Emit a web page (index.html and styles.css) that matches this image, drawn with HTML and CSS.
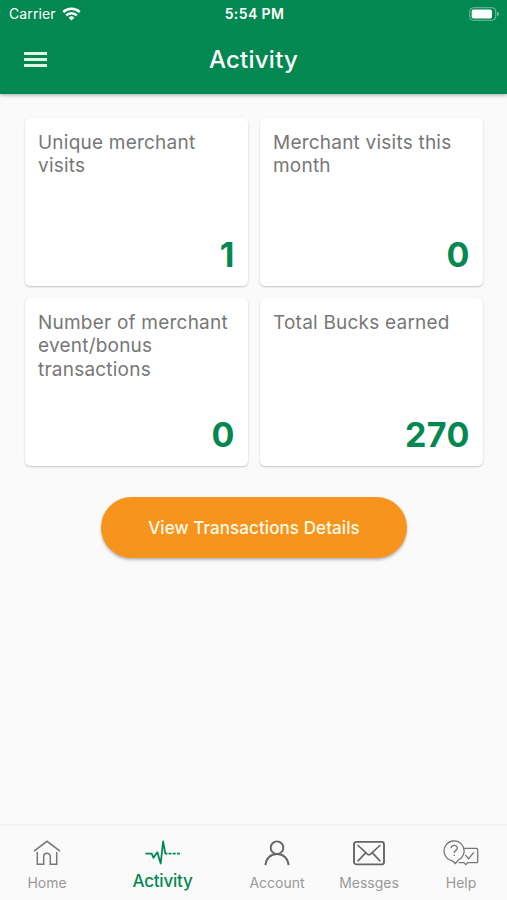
FILE: index.html
```html
<!DOCTYPE html>
<html lang="en">

<head>
	<meta charset="UTF-8">
	<title>Activity</title>
	<link rel="stylesheet" href="styles.css">
</head>

<body>
	<header>
		<div class="status">
			<div class="carrier">
				<span>Carrier</span>
				<svg width="19" height="14" viewBox="0 0 19 14" fill="none" stroke="#fff" stroke-width="2.5">
					<path d="M1.2 5.1a11.8 11.8 0 0 1 16.6 0"/>
					<path d="M4.2 8.4a7.5 7.5 0 0 1 10.6 0"/>
					<path d="M9.5 13.6L6.6 10.7a4.1 4.1 0 0 1 5.8 0z" fill="#fff" stroke="none"/>
				</svg>
			</div>
			<strong class="time">5:54 PM</strong>
			<div class="battery">
				<svg width="31" height="14" viewBox="0 0 31 14">
					<rect x="0.8" y="0.7" width="26" height="12.6" rx="3.6" fill="none" stroke="#fff" stroke-opacity="0.45"/>
					<rect x="2.7" y="2.5" width="20.3" height="9" rx="1.8" fill="#fff"/>
					<path d="M28.2 4.8c2.4.9 2.4 3.5 0 4.4z" fill="#fff" fill-opacity="0.5"/>
				</svg>
			</div>
		</div>
		<div class="toolbar">
			<button class="menu" type="button" aria-label="Menu">
				<span></span>
				<span></span>
				<span></span>
			</button>
			<h1>Activity</h1>
		</div>
	</header>

	<main>
		<ul class="cards">
			<li>
				<p>Unique merchant visits</p>
				<strong>1</strong>
			</li>
			<li>
				<p>Merchant visits this month</p>
				<strong>0</strong>
			</li>
			<li>
				<p>Number of merchant event/bonus transactions</p>
				<strong>0</strong>
			</li>
			<li>
				<p>Total Bucks earned</p>
				<strong>270</strong>
			</li>
		</ul>
		<button class="details" type="button">View Transactions Details</button>
	</main>

	<nav>
		<a class="tab">
			<svg width="28" height="26" viewBox="0 0 28 26">
				<path d="M1 11.2L14 1.3l13 9.9M4.3 12v12.2h6.4v-7.6a3.3 3.3 0 0 1 6.6 0v7.6h6.4V12"/>
			</svg>
			<span>Home</span>
		</a>
		<a class="tab active">
			<svg width="36" height="26" viewBox="0 0 36 26">
				<path d="M0.5 13.6h6.2l1.8 4.2 3.8-5.5 3.4 11.2L18.1 1.5l2.2 12.1h2.2"/>
				<path d="M23.5 13.6h12" stroke-dasharray="3 1.2"/>
			</svg>
			<span>Activity</span>
		</a>
		<a class="tab">
			<svg class="bold" width="26" height="26" viewBox="0 0 26 26">
				<circle cx="13" cy="7.7" r="6.3"/>
				<path d="M1.4 25.2c.6-6.8 5.3-11.2 11.6-11.2s11 4.4 11.6 11.2"/>
			</svg>
			<span>Account</span>
		</a>
		<a class="tab">
			<svg class="bold" width="32" height="26" viewBox="0 0 32 26">
				<rect x="1" y="1.9" width="30" height="22.5" rx="2.5"/>
				<path d="M4.6 5l9.8 9.1q1.6 1.3 3.2 0L27.4 5M4.6 21.4l8-8.5M27.4 21.4l-8-8.5" stroke-width="1.6"/>
			</svg>
			<span>Messges</span>
		</a>
		<a class="tab">
			<svg class="thin" width="36" height="26" viewBox="0 0 36 26">
				<path d="M20.2 8.4h13.2a1.3 1.3 0 0 1 1.3 1.3v11.7a1.3 1.3 0 0 1-1.3 1.3h-8.8l-1.7 1.9-1.9-1.9h-5.4"/>
				<path d="M9 20.7a10 10 0 1 1 6.3-.7l-2.9 3.5z"/>
				<path d="M8 8.3c.2-4 6.3-3.9 6.3-.2 0 2.300-3.100 2.300-3.100 5M11.200 14.500v1.500"/>
				<path d="M22.2 14.9l3.400 3.800 5.200-6.300"/>
			</svg>
			<span>Help</span>
		</a>
	</nav>
</body>

</html>
```

FILE: styles.css
```css
* {
	box-sizing: border-box;
}

body {
	display: flex;
	flex-direction: column;
	height: 100vh;
	margin: 0;
	background: #fafafa;
	font-family: Inter, 'Liberation Sans', sans-serif;
	overflow: hidden;
}

header {
	height: 94px;
	background: #038851;
	color: #fff;
	box-shadow: 0 1px 4px rgba(0, 0, 0, 0.35);
}

.status {
	display: grid;
	grid-template-columns: 1fr auto 1fr;
	align-items: center;
	height: 27px;
	padding: 0 7px 0 9px;
	font-size: 14px;
}

.carrier {
	display: flex;
	align-items: center;
	gap: 6px;
	letter-spacing: 0.1px;
}

.time {
	font-weight: 600;
	letter-spacing: 0.4px;
}

.battery {
	display: flex;
	justify-content: flex-end;
}

.toolbar {
	display: grid;
	grid-template-columns: 70px 1fr 70px;
	align-items: center;
	height: 65px;
}

.menu {
	display: flex;
	flex-direction: column;
	gap: 3px;
	width: 23px;
	margin-left: 24px;
	padding: 0;
	border: 0;
	background: none;
}

.menu span {
	height: 3px;
	background: #e0f5e8;
}

h1 {
	margin: 0;
	font-size: 24px;
	font-weight: 500;
	letter-spacing: 0.25px;
	text-align: center;
}

main {
	flex: 1;
	padding: 24px 24px 0 25px;
	text-align: center;
}

.cards {
	display: grid;
	grid-template-columns: 1fr 1fr;
	gap: 12px;
	margin: 0 0 31px;
	padding: 0;
	list-style: none;
	text-align: left;
}

.cards li {
	display: flex;
	flex-direction: column;
	justify-content: space-between;
	height: 168px;
	padding: 13px;
	background: #fff;
	border-radius: 5px;
	box-shadow: 0 1px 2px rgba(0, 0, 0, 0.22);
}

.cards p {
	margin: 0;
	color: #777;
	font-size: 19px;
	line-height: 23.3px;
	letter-spacing: 0.22px;
}

.cards strong {
	color: #038851;
	font-size: 34px;
	line-height: 36px;
	letter-spacing: 0.5px;
	text-align: right;
}

.details {
	width: 306px;
	height: 61px;
	border: 0;
	border-radius: 31px;
	background: #f7941d;
	color: #fffbe8;
	font: 500 17px Inter, sans-serif;
	letter-spacing: 0.08px;
	box-shadow: 0 2px 3px rgba(0, 0, 0, 0.27);
}

nav {
	display: flex;
	height: 76px;
	border-top: 2px solid #f3f3f3;
}

.tab {
	flex: 0 0 92px;
	display: flex;
	flex-direction: column;
	align-items: center;
	padding-top: 14px;
	color: #999;
	font-size: 14px;
	line-height: 18px;
}

.tab:first-child {
	flex-basis: 94px;
}

.tab span {
	margin-top: 8px;
}

.tab svg {
	fill: none;
	stroke: #777;
	stroke-width: 1.5;
}

.tab .bold {
	stroke: #666;
	stroke-width: 1.9;
}

.tab .thin {
	stroke-width: 1.3;
}

.tab.active {
	flex: 1;
	color: #038851;
	font-size: 17px;
	font-weight: 500;
	letter-spacing: -0.2px;
}

.active span {
	margin-top: 6px;
}

.tab.active svg {
	stroke: #038851;
	stroke-width: 1.8;
	stroke-linejoin: round;
}
```
